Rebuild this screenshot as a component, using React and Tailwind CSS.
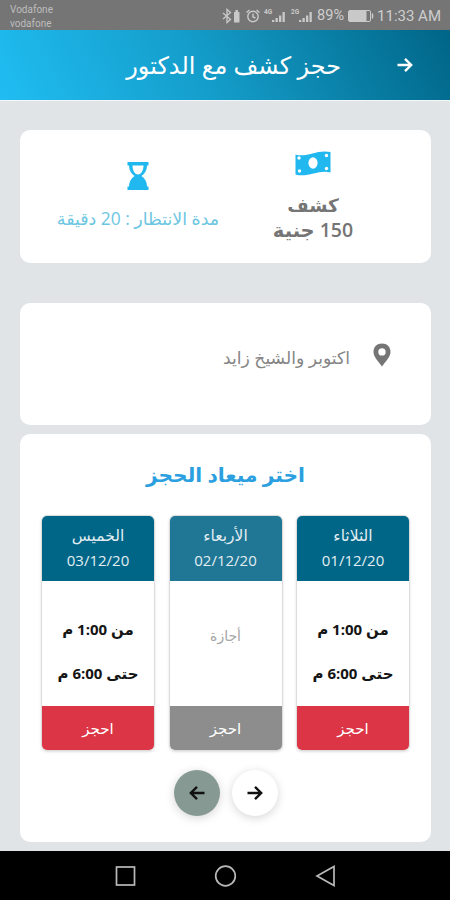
import { clsx } from 'clsx';

const days = [
  { name: 'الثلاثاء', date: '01/12/20', from: 'من 1:00 م', to: 'حتى 6:00 م' },
  { name: 'الأربعاء', date: '02/12/20', off: true },
  { name: 'الخميس', date: '03/12/20', from: 'من 1:00 م', to: 'حتى 6:00 م' },
];

function Arrow({ className }) {
  return (
    <svg viewBox="0 0 16 16" className={className} fill="none" stroke="currentColor" strokeWidth="2.4">
      <path d="M0.5 8H14M8 1.8L14.2 8L8 14.2" />
    </svg>
  );
}

function Signal({ label }) {
  return (
    <svg viewBox="0 0 23 16" className="h-4 w-[23px]" fill="#c9c9c9">
      <text x="0" y="6" fontSize="6.5" fontWeight="700" fontFamily="Roboto, sans-serif">{label}</text>
      <path d="M8 12h2.300v2H8zM11.500 10h2.300v4h-2.300zM15 7.500h2.300V14h-2.300zM18.500 4h2.300v10h-2.300z" />
    </svg>
  );
}

function StatusBar() {
  return (
    <div dir="ltr" className="flex h-[30px] items-center justify-between bg-[#757575] pr-[9px] pl-[10px] font-[Roboto,sans-serif] text-[#cecece]">
      <div className="pt-[3px] text-[10px] leading-[14px] text-[#bdbdbd]">
        <div>Vodafone</div>
        <div>vodafone</div>
      </div>
      <div className="flex items-center pt-[2px]">
        <svg viewBox="0 0 20 16" className="h-4 w-5" fill="none" stroke="#c9c9c9" strokeWidth="1.3">
          <path d="M1 5l7.500 6.500L5 14.500V1.500L8.500 4.500L1 11" />
          <path d="M12 4h5.500v10.500H12zM13.500 2h2.500v2h-2.500z" fill="#c9c9c9" stroke="none" />
        </svg>
        <svg viewBox="0 0 16 16" className="ml-[3px] h-4 w-4" fill="none" stroke="#c9c9c9" strokeWidth="1.4">
          <circle cx="8" cy="8.500" r="5.200" />
          <path d="M8 5.500V9l2.500 1M1.500 4.500L4.500 2M14.500 4.500L11.500 2" />
        </svg>
        <span className="ml-[3px]"><Signal label="4G" /></span>
        <span className="ml-1"><Signal label="2G" /></span>
        <span className="ml-[3px] text-[14.500px]">89%</span>
        <svg viewBox="0 0 26 12" className="ml-1 h-3 w-[26px]" fill="none" stroke="#c9c9c9">
          <rect x="0.500" y="0.500" width="22" height="11" rx="1.500" />
          <path d="M1 1h17v10H1z" fill="#c9c9c9" />
          <path d="M24.500 3.500v5" strokeWidth="1.500" />
        </svg>
        <span className="ml-[3px] text-[15px] whitespace-nowrap">11:33 AM</span>
      </div>
    </div>
  );
}

function DayCard({ day }) {
  return (
    <div className="flex h-[236px] w-[114px] flex-col overflow-hidden rounded-[6px] border border-[#dcdcdc] shadow-sm">
      <div className={clsx('-mx-px -mt-px flex h-[66px] flex-col items-center pt-[8px] text-[15px] leading-[25px] text-[#e3eef2]', day.off ? 'bg-[#1f7695]' : 'bg-[#006688]')}>
        <div className="text-[15.500px]">{day.name}</div>
        <div className="font-medium">{day.date}</div>
      </div>
      <div className="flex flex-1 flex-col items-center justify-center whitespace-nowrap">
        {day.off ? (
          <div className="-mt-4 text-[14px] text-[#a5a5a5]">أجازة</div>
        ) : (
          <div className="pt-[14px] text-center text-[15px] leading-[44px] font-bold text-[#151515]">
            <div>{day.from}</div>
            <div>{day.to}</div>
          </div>
        )}
      </div>
      <button className={clsx('-mx-px -mb-px h-[45px] text-[15px] text-white', day.off ? 'bg-[#8d8d8d]' : 'bg-[#dc3545]')}>احجز</button>
    </div>
  );
}

export default function App() {
  return (
    <div dir="rtl" className="flex h-[900px] w-[450px] flex-col overflow-hidden bg-[#e0e4e7] font-['Open_Sans','DejaVu_Sans',sans-serif]">
      <StatusBar />
      <header className="flex h-[70px] items-center bg-linear-[62deg,#20bdf2,#149dca_45%,#006587] pr-[37px] text-white">
        <Arrow className="h-4 w-4" />
        <h1 className="mr-[56px] text-[24px] whitespace-nowrap">حجز كشف مع الدكتور</h1>
      </header>
      <div className="h-px bg-[#f4f8fa]" />

      <main className="flex flex-1 flex-col pr-[19px] pl-5">
        <section className="mt-[29px] flex h-[133px] rounded-[10px] bg-white">
          <div className="mr-[53px] flex w-[130px] flex-col items-center pt-[20px] text-[#757575]">
            <svg viewBox="0 0 36 26" className="h-[26px] w-9">
              <path d="M0.500 4.500C12 8 22-1 35.500 2v20.500C24 19 13 28 0.500 24.500z" fill="#20b8ee" />
              <ellipse cx="18" cy="13" rx="4.600" ry="5.800" fill="#fff" />
              <g fill="#fff">
                <circle cx="4" cy="8" r="1.700" /><circle cx="31.500" cy="5.500" r="1.700" />
                <circle cx="4.500" cy="21" r="1.700" /><circle cx="31.500" cy="18.500" r="1.700" />
              </g>
            </svg>
            <div className="mt-[16px] text-center leading-[25px] font-semibold">
              <div className="text-[18.500px]">كشف</div>
              <div className="text-[19.500px]">150 جنية</div>
            </div>
          </div>
          <div className="mr-[15px] flex w-[190px] flex-col items-center pt-[31px]">
            <svg viewBox="0 0 22 30" className="h-[30px] w-[22px]" fill="#20b8ee">
              <path fillRule="evenodd" d="M0.500 1H21.500V4.500H20C20 9 18 12.500 14.500 15C18 17.500 20 21 20 25.500H21.500V29H0.500V25.500H2C2 21 4 17.500 7.500 15C4 12.500 2 9 2 4.500H0.500zM5.500 4.500C5.500 9 7.500 13.500 11 13.500S16.500 9 16.500 4.500z" />
            </svg>
            <div className="mt-[14px] text-[17.400px] leading-[26px] whitespace-nowrap text-[#6cc6e1]">مدة الانتظار : 20 دقيقة</div>
          </div>
        </section>

        <section className="mt-10 flex h-[122px] rounded-[10px] bg-white pt-10 pr-10 text-[#858585]">
          <svg viewBox="0 0 18 24" className="h-6 w-[18px]" fill="#757575">
            <path fillRule="evenodd" d="M9 0.500C4 0.500 0.500 4 0.500 8.800C0.500 14 5 18 9 23.500C13 18 17.500 14 17.500 8.800C17.500 4 14 0.500 9 0.500zM9 5.200A3.700 3.700 0 1 1 9 12.600A3.700 3.700 0 1 1 9 5.200z" />
          </svg>
          <div className="mr-[23px] text-[17.200px] leading-[30px] whitespace-nowrap">اكتوبر والشيخ زايد</div>
        </section>

        <section className="mt-[9px] flex h-[408px] flex-col items-center rounded-[10px] bg-white pt-[24px]">
          <h2 className="text-[20.200px] leading-[32px] font-bold whitespace-nowrap text-[#2b9fe0]">اختر ميعاد الحجز</h2>
          <div className="mt-[25px] flex gap-[13.500px]">
            {days.map((d) => <DayCard key={d.date} day={d} />)}
          </div>
          <div className="mt-[19px] flex gap-3">
            <button className="flex h-[46px] w-[46px] items-center justify-center rounded-full bg-white text-[#111] shadow-[0_2px_10px_rgba(0,0,0,0.17)]">
              <Arrow className="h-4 w-4" />
            </button>
            <button className="flex h-[46px] w-[46px] items-center justify-center rounded-full bg-[#869992] text-[#111] shadow-[0_2px_10px_rgba(0,0,0,0.17)]">
              <Arrow className="h-4 w-4 rotate-180" />
            </button>
          </div>
        </section>
      </main>

      <nav className="flex h-[49px] items-center justify-center bg-black">
        <svg viewBox="0 0 220 22" className="h-[22px] w-[220px]" fill="none" stroke="#b9b9b9" strokeWidth="1.700">
          <rect x="1.500" y="2" width="18" height="18" />
          <circle cx="110.500" cy="11" r="9.800" />
          <path d="M202 11L219 1.500V20.500z" />
        </svg>
      </nav>
    </div>
  );
}
